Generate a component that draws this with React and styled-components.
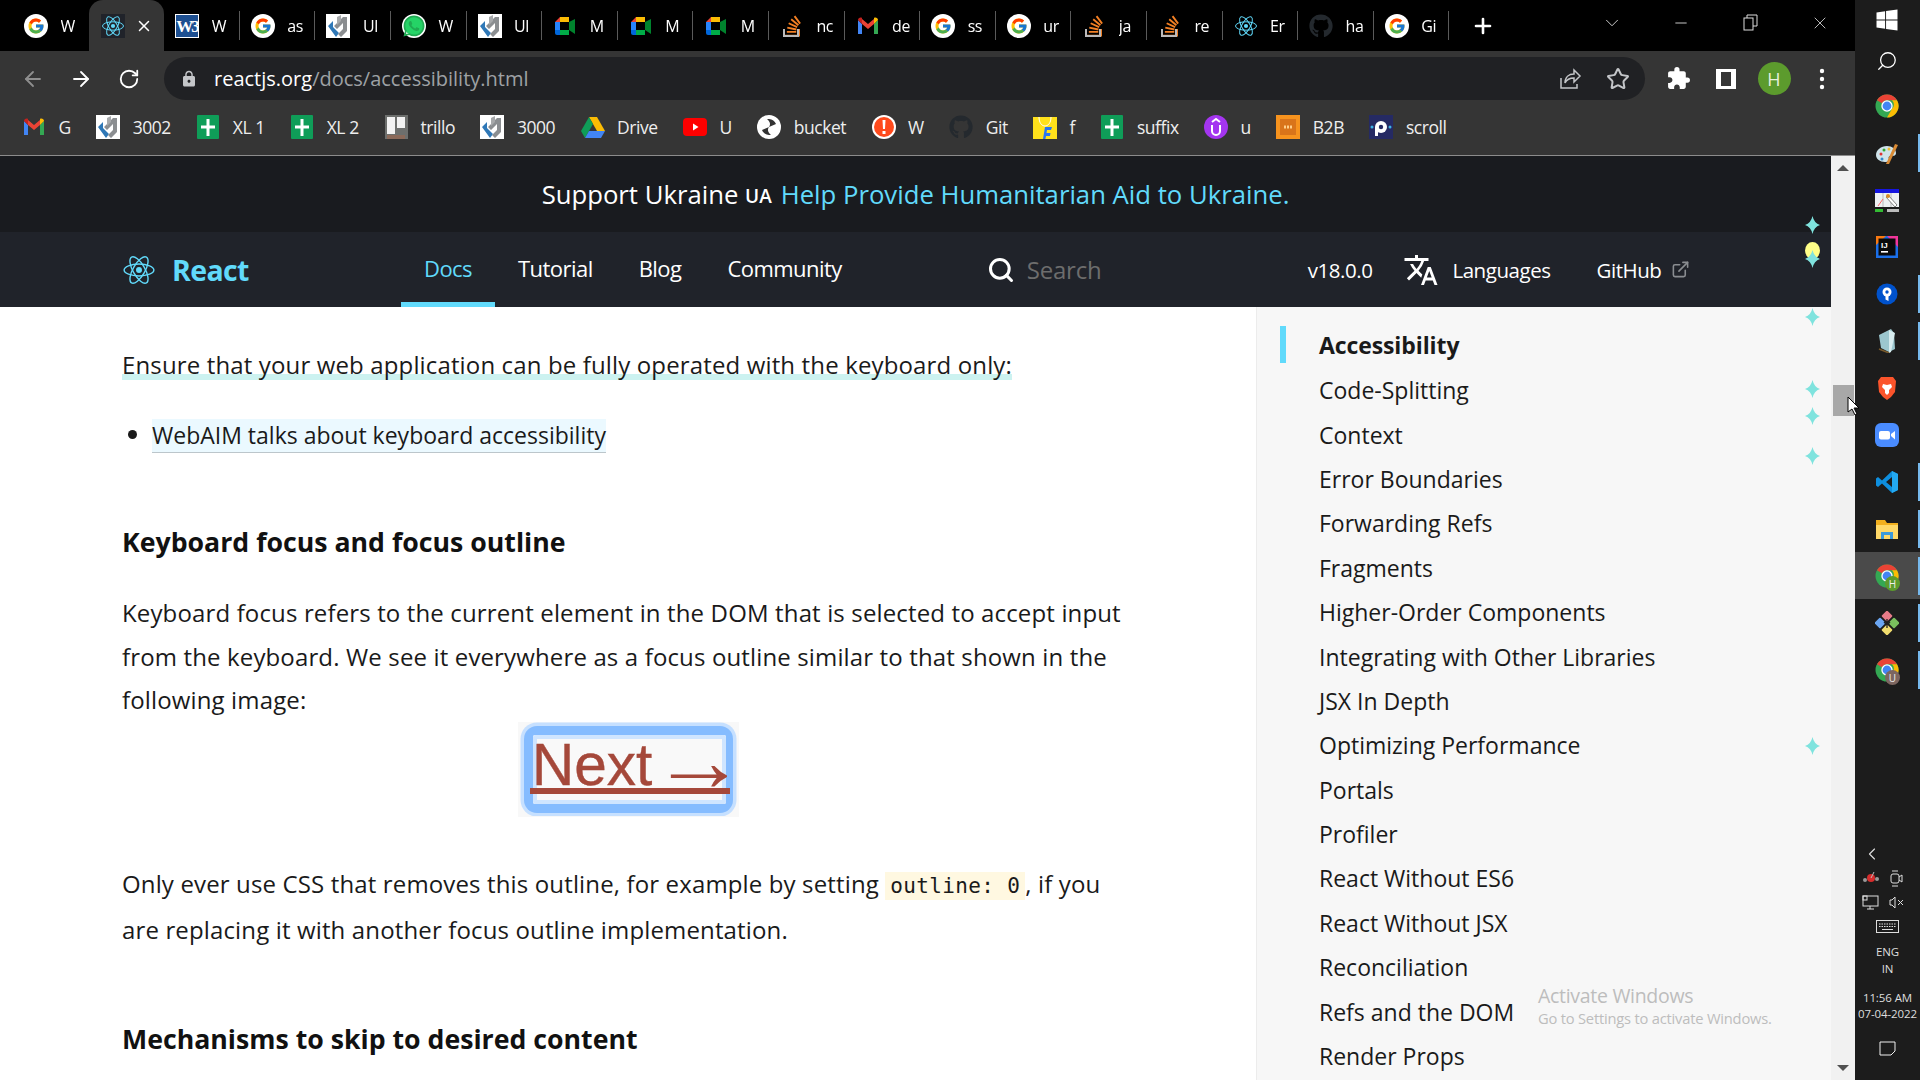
import React from 'react';
import styled, { createGlobalStyle } from 'styled-components';
import { ArrowLeft, ArrowRight, RotateCw, Star as StarIcon, ChevronDown, Plus, X, Minus, ChevronLeft, Search, ExternalLink } from 'lucide-react';
import { FcGoogle } from 'react-icons/fc';
import { FaWhatsapp, FaStackOverflow, FaGithub, FaWindows } from 'react-icons/fa';
import { MdTranslate, MdExtension, MdLock } from 'react-icons/md';

const UI = '"Open Sans", "Noto Sans", sans-serif';

const Global = createGlobalStyle`
  html, body { margin: 0; padding: 0; background: #1c1c1c; overflow: hidden; }
  * { box-sizing: border-box; }
`;

const Screen = styled.div`
  position: relative; width: 1920px; height: 1080px; overflow: hidden; display: flex;
  font-family: ${UI}; background: #fff;
`;
const Chrome = styled.div`width: 1855px; height: 1080px; display: flex; flex-direction: column;`;

const TabStrip = styled.div`height: 51px; background: #000; display: flex; align-items: center; padding-left: 13px; flex: none;`;
const Tab = styled.div`
  width: 75.6px; height: 51px; flex: none; display: flex; align-items: center; gap: 12.5px; padding-left: ${p => p.$active ? 12.5 : 11}px;
  position: relative; color: #fff; font-size: 16px; letter-spacing: -0.4px;
  background: ${p => p.$active ? '#353535' : 'transparent'};
  border-radius: ${p => p.$active ? '14px 14px 0 0' : '0'};
  &::after { content: ''; display: ${p => p.$sep ? 'block' : 'none'}; position: absolute; right: 0; top: 11px; bottom: 11px; width: 1px; background: #5a5a5a; }
`;
const TabTitle = styled.span`display: block; width: 23px; overflow: hidden; white-space: nowrap; -webkit-mask-image: linear-gradient(90deg, #000 70%, transparent);`;
const TabClose = styled.span`display: flex; margin-left: -3px; color: #fff;`;
const NewTab = styled.div`margin-left: 22px; width: 24px; display: flex; color: #fff;`;
const WinControls = styled.div`margin-left: auto; display: flex; color: #ddd;`;
const WinButton = styled.div`width: 69.5px; height: 51px; display: flex; align-items: center; justify-content: center; padding-bottom: 6px;`;

const Toolbar = styled.div`height: 51px; flex: none; background: #353535; display: flex; padding: 6px 0 2px 9px; color: #fff;`;
const ToolButton = styled.div`width: 48px; height: 43px; display: flex; align-items: center; justify-content: center; color: ${p => p.$dim ? '#8e8e8e' : '#fff'}; flex: none;`;
const Address = styled.div`
  width: 1481px; height: 43px; margin: 0 9px 0 11px; border-radius: 22px; background: #202124; display: flex; align-items: center; padding-left: 16px; font-size: 20px; flex: none;
`;
const LockWrap = styled.span`display: flex; color: #c4c6c9; margin-right: 16px;`;
const Host = styled.span`color: #fff;`;
const UrlPath = styled.span`color: #9ea1a5;`;
const AddressActions = styled.div`margin-left: auto; display: flex; align-items: center; gap: 24px; padding-right: 15px; color: #c4c6c9;`;
const Avatar = styled.div`width: 33px; height: 33px; border-radius: 50%; background: #5c9b2d; color: #e8f0df; display: flex; align-items: center; justify-content: center; font-size: 18px;`;

const Bookmarks = styled.div`height: 54px; flex: none; background: #353535; border-bottom: 1px solid #8c8c8c; display: flex; align-items: center; padding: 0 0 4px 22px; gap: 25.4px; color: #eee; font-size: 17.5px; letter-spacing: -0.45px;`;
const Bookmark = styled.div`display: flex; align-items: center; gap: 12.5px; white-space: nowrap;`;

const Page = styled.div`flex: 1; display: flex; min-height: 0;`;
const Site = styled.div`flex: 1; min-width: 0; display: flex; flex-direction: column;`;
const Banner = styled.div`height: 76px; flex: none; background: #191b1f; color: #fff; display: flex; align-items: center; justify-content: center; font-size: 25.7px; white-space: pre;`;
const Country = styled.span`font-size: 19px; font-weight: 600; margin: 3px 4px 0 0;`;
const BannerLink = styled.span`color: #61dafb; margin-left: 5px;`;

const Nav = styled.div`height: 75px; flex: none; background: #20232a; display: flex; align-items: stretch; padding-left: 122px; color: #fff; font-size: 22px; letter-spacing: -0.55px;`;
const Brand = styled.div`display: flex; align-items: center; gap: 16px; color: #61dafb; font-weight: 700; font-size: 28.5px; letter-spacing: -0.6px; width: 279px; flex: none;`;
const NavLink = styled.div`
  padding: 2px 23px 0; display: flex; align-items: center; height: 75px;
  color: ${p => p.$active ? '#61dafb' : '#fff'};
  border-bottom: 5px solid ${p => p.$active ? '#61dafb' : 'transparent'};
`;
const NavSearch = styled.div`margin-left: 122px; width: 321px; flex: none; display: flex; align-items: center; gap: 12px; color: #6d6d6d; font-size: 24px; letter-spacing: -0.2px;`;
const NavRight = styled.div`display: flex; align-items: center; font-size: 20.5px; letter-spacing: -0.45px;`;
const Version = styled.span`margin-right: 31px;`;
const Lang = styled.div`display: flex; align-items: center; gap: 13px; margin-right: 46px;`;
const Hub = styled.div`display: flex; align-items: center; gap: 10px;`;

const Content = styled.div`flex: 1; min-height: 0; display: flex; overflow: hidden;`;
const Article = styled.div`width: 1256px; flex: none; background: #fff; padding: 36px 0 0 122px; color: #1a1a1a; font-size: 24px; letter-spacing: 0.14px; line-height: 43.5px;`;
const Para = styled.p`margin: ${p => p.$mt || 0}px 0 0; white-space: nowrap;`;
const Underlined = styled.span`background: linear-gradient(#ccf2f0, #ccf2f0) 0 calc(100% - 7px) / 100% 6px no-repeat; display: inline-block;`;
const Bullets = styled.ul`margin: 25px 0 0; padding: 0 0 0 30px; `;
const BulletLink = styled.span`background: #ebf9ff; border-bottom: 1px solid #bcc6cb; display: inline-block; line-height: 33px; height: 34px; vertical-align: middle; font-size: 23px; letter-spacing: 0;`;
const Heading = styled.h3`margin: ${p => p.$mt}px 0 0; font-size: 26.7px; font-weight: 700; line-height: 44px; color: #111; white-space: nowrap; letter-spacing: 0;`;
const Code = styled.code`font-family: "DejaVu Sans Mono", "Liberation Mono", monospace; font-size: 21px; letter-spacing: 0.36px; background: #fff8e1; padding: 2px 5px;`;
const Figure = styled.div`
  width: 221px; height: 95px; margin: 0 0 0 396px; background: #f8f8f8; display: flex; padding: 4px 6px;
`;
const FocusRing = styled.div`
  width: 100%; height: 100%; border-radius: 13px; background: #85bcff; box-shadow: 0 0 0 3.5px #c6e0ff; padding: 9px; display: flex; filter: blur(0.3px);
`;
const FocusInner = styled.div`
  flex: 1; background: #f9f9f9; box-shadow: inset 0 0 0 4px #cfe5ff; border-radius: 2px; position: relative;
  color: #a5483a; font-family: "Liberation Sans", Arial, sans-serif; font-size: 58.5px; line-height: 60px; letter-spacing: 0; white-space: nowrap; text-indent: -1px; -webkit-text-stroke: 0.4px #a5483a;
`;
const NextArrow = styled.span`display: inline-block; transform: translateX(-16px) scale(1.62, 1.5); transform-origin: left 62%; -webkit-text-stroke: 0;`;
const NextBar = styled.div`position: absolute; left: -3px; right: -4px; top: 53px; height: 6px; background: #a5483a;`;

const Sidebar = styled.div`flex: 1; background: #f7f7f7; border-left: 1px solid #ececec; padding: 15px 0 0 23px; color: #1a1a1a; font-size: 23px;`;
const SideItem = styled.div`
  height: ${p => p.$active ? 46 : 44.4}px; display: flex; align-items: center; white-space: nowrap;
  font-weight: ${p => p.$active ? 700 : 400}; letter-spacing: ${p => p.$active ? -0.1 : 0}px;
`;
const SideBar = styled.span`width: 6px; height: 37px; background: ${p => p.$active ? '#61dafb' : 'transparent'}; margin-right: 33px; flex: none; margin-bottom: 2px;`;

const Scrollbar = styled.div`width: 24px; flex: none; background: #f1f1f1; display: flex; flex-direction: column; align-items: center;`;
const ScrollBtn = styled.div`height: 24px; width: 100%; display: flex; align-items: center; justify-content: center; flex: none; margin-top: ${p => p.$auto ? 'auto' : 0};`;
const Thumb = styled.div`width: 21px; height: 31px; margin: 205px 0 0 1px; background: #a8a8a8; flex: none;`;
const Tri = styled.span`width: 0; height: 0; border-left: 6px solid transparent; border-right: 6px solid transparent; ${p => p.$down ? 'border-top: 6px solid #505050;' : 'border-bottom: 6px solid #505050;'}`;

const Taskbar = styled.div`width: 65px; flex: none; background: #1c1c1c; display: flex; flex-direction: column; align-items: center; color: #e4e4e4; position: relative;`;
const TaskIcon = styled.div`
  width: 65px; height: ${p => p.$h || 47}px; flex: none; display: flex; align-items: center; justify-content: center; position: relative; padding-right: 2px;
  background: ${p => p.$active ? '#4a4a4a' : 'transparent'};
  &::after { content: ''; display: ${p => p.$run ? 'block' : 'none'}; position: absolute; right: 0; top: 5px; bottom: 4px; width: 2px; background: #76b9ed; }
`;
const Badge = styled.span`position: absolute; left: 30px; top: 24px; width: 15px; height: 15px; border-radius: 50%; background: ${p => p.$c}; color: #eee; font-size: 10px; display: flex; align-items: center; justify-content: center;`;
const Tray = styled.div`margin-top: auto; width: 100%; display: flex; flex-direction: column; align-items: center; color: #dedede;`;
const TrayRow = styled.div`height: 24px; display: flex; align-items: center; justify-content: center; gap: 10px; flex: none; padding-right: ${p => p.$pr || 0}px;`;
const TrayText = styled.div`font-size: 11.5px; line-height: 17px; text-align: center; white-space: nowrap; letter-spacing: -0.1px; margin-top: ${p => p.$mt || 0}px;`;
const Notif = styled.div`height: 38px; margin-top: 13px; display: flex; align-items: flex-start; padding-top: 6px; margin-bottom: 7px;`;

const Sparkle = styled.svg`position: absolute; left: 1805px; width: 15px; height: 18px; top: ${p => p.$y - 9}px; pointer-events: none;`;
const Bulb = styled.div`position: absolute; left: 1805px; top: 242px; width: 15px; height: 17px; border-radius: 50%; background: #ffff88;`;
const Watermark = styled.div`position: absolute; left: 1538px; top: 983px; color: #bdbdbd; font-size: 19.5px; letter-spacing: -0.3px; line-height: 26px; pointer-events: none;`;
const WatermarkSub = styled.div`font-size: 14.7px; line-height: 18px; letter-spacing: -0.2px; margin-top: 0;`;
const Pointer = styled.svg`position: absolute; left: 1847px; top: 396px; width: 13px; height: 20px;`;

const Ico = ({ s = 24, children }) => <svg width={s} height={s} viewBox="0 0 24 24" style={{ flex: 'none', display: 'block' }}>{children}</svg>;
const G = () => <Ico><circle cx="12" cy="12" r="12" fill="#fff" /><foreignObject x="3" y="3" width="18" height="18"><FcGoogle size={18} /></foreignObject></Ico>;
const Atom = ({ s = 24, bg, stroke = '#61dafb' }) => <Ico s={s}>{bg && <rect width="24" height="24" fill={bg} />}<g fill="none" stroke={stroke} strokeWidth="1"><ellipse cx="12" cy="12" rx="10.5" ry="4.2" /><ellipse cx="12" cy="12" rx="10.5" ry="4.2" transform="rotate(60 12 12)" /><ellipse cx="12" cy="12" rx="10.5" ry="4.2" transform="rotate(120 12 12)" /></g><circle cx="12" cy="12" r="2.1" fill={stroke} /></Ico>;
const W3 = () => <Ico><rect width="24" height="24" fill="#fff" /><rect x="1" y="1" width="22" height="22" fill="#1d4f91" /><text x="12" y="18" fontSize="17" fontWeight="700" fill="#fff" textAnchor="middle" fontFamily="Liberation Serif, serif" letterSpacing="-2">W3</text></Ico>;
const Lucee = () => <Ico><rect width="24" height="24" fill="#fff" /><path d="M2 12l5-5v6l6 6-3 4z" fill="#2f78b7" /><path d="M8 12l3 3 6-6v6l-5 5 3 3 6-6V3h-4z" fill="#8b8e91" /><path d="M11 3v8l4-4V1z" fill="#a7a9ab" /></Ico>;
const WA = () => <Ico><circle cx="12" cy="12" r="12" fill="#fff" /><circle cx="12" cy="12" r="9.5" fill="#25d366" /><foreignObject x="0" y="0" width="24" height="24"><FaWhatsapp size={24} color="#1faa52" /></foreignObject></Ico>;
const Meet = () => <Ico><path d="M2 8l5-5h9v5H7v8H2z" fill="#ea4335" /><path d="M7 3h9v5H7z" fill="#fbbc04" /><path d="M2 8h5v8H2z" fill="#2684fc" /><path d="M2 16h5v5H4a2 2 0 0 1-2-2z" fill="#0066da" /><path d="M7 16h9v5H7z" fill="#00ac47" /><path d="M16 8v8l6 4V5z" fill="#00832d" /></Ico>;
const SO = () => <Ico><foreignObject width="24" height="24"><FaStackOverflow size={24} color="#f48024" /></foreignObject><path d="M4 15v7h14v-7" fill="none" stroke="#bcbbbb" strokeWidth="2" /></Ico>;
const Gmail = () => <Ico><path d="M2 6v14h4V10z" fill="#4285f4" /><path d="M18 10v10h4V6z" fill="#34a853" /><path d="M6 10l6 5 6-5V5l-6 5-6-5z" fill="#ea4335" /><path d="M2 6c0-2 2.5-3 4-2l0 6z" fill="#c5221f" /><path d="M22 6c0-2-2.5-3-4-2v6z" fill="#fbbc04" /></Ico>;
const Hub_ = () => <Ico><foreignObject width="24" height="24"><FaGithub size={24} color="#24292e" /></foreignObject></Ico>;
const Sheets = () => <Ico><rect x="1" width="22" height="24" rx="1" fill="#0f9d58" /><path d="M10.5 4h3v6.5H19v3h-5.5V21h-3v-7.5H5v-3h5.5z" fill="#fff" /></Ico>;
const Trillo = () => <Ico><rect x="1" width="23" height="24" fill="#6d6f6d" /><rect x="3" y="2" width="8" height="17" fill="#f2f2f2" /><rect x="13" y="2" width="8" height="11" fill="#f2f2f2" /><rect x="3" y="20" width="18" height="4" fill="#8b6a5a" /></Ico>;
const Drive = () => <Ico><path d="M8 2h8l8 14h-8z" fill="#fbbc04" /><path d="M8 2L0 16l4 7 8-14z" fill="#0f9d58" /><path d="M4 23h16l4-7H8z" fill="#4285f4" /></Ico>;
const YT = () => <Ico><rect y="3" width="24" height="18" rx="4" fill="#ff0000" /><path d="M10 8.5l5.5 3.5-5.5 3.5z" fill="#fff" /></Ico>;
const Bucket = () => <Ico><circle cx="12" cy="12" r="12" fill="#fff" /><path d="M12 4a8 8 0 0 1 7 5l-7 3c2-3 1-5-2-8zM12 20a8 8 0 0 1-7-5l7-3c-2 3-1 5 2 8z" fill="#333" /></Ico>;
const Alert = () => <Ico><circle cx="12" cy="12" r="12" fill="#fff" /><circle cx="12" cy="12" r="10" fill="#ff4a1c" /><path d="M10.5 5h3l-.5 9h-2zM10.5 16h3v3h-3z" fill="#fff" /></Ico>;
const Flip = () => <Ico><path d="M0 2h24v22H0z" fill="#ffe11b" /><path d="M6 2c0 6 3 9 6 9s6-3 6-9" fill="none" stroke="#fff" strokeWidth="1" /><path d="M10 24l2-12h7l-1 3h-4l-.5 3h4l-.5 3h-4l-.6 3z" fill="#2874f0" /></Ico>;
const UBook = () => <Ico><ellipse cx="12" cy="12" rx="12" ry="12" fill="#a435f0" /><path d="M8 10v6a4 4 0 0 0 8 0v-6" fill="none" stroke="#fff" strokeWidth="2" /><path d="M8 7l4-3 4 3" fill="none" stroke="#fff" strokeWidth="2" /></Ico>;
const B2B = () => <Ico><rect width="24" height="24" fill="#f7931e" /><rect x="4" y="4" width="16" height="16" fill="#d9741a" /><path d="M8 12h8" stroke="#ffcf8a" strokeWidth="3" strokeDasharray="2 1" /></Ico>;
const Scroll = () => <Ico><rect width="24" height="24" fill="#252a63" /><circle cx="12" cy="12" r="6" fill="#fff" /><circle cx="12" cy="12" r="2.2" fill="#252a63" /><rect x="6" y="12" width="3" height="9" fill="#fff" /><circle cx="3" cy="12" r="1.5" fill="#3db4e8" /><circle cx="21" cy="12" r="1.5" fill="#3db4e8" /></Ico>;
const ChromeLogo = ({ s = 24 }) => <Ico s={s}><circle cx="12" cy="12" r="11.5" fill="#34a853" /><path d="M12 .5a11.5 11.5 0 0 1 10 5.75H12a5.75 5.75 0 0 0-5 2.9L2 6.3A11.5 11.5 0 0 1 12 .5z" fill="#ea4335" /><path d="M22 6.25A11.5 11.5 0 0 1 12 23.5l5-8.65a5.75 5.75 0 0 0 0-8.6z" fill="#fbbc04" /><circle cx="12" cy="12" r="5.7" fill="#fff" /><circle cx="12" cy="12" r="4.4" fill="#4285f4" /></Ico>;
const Palette = () => <Ico><path d="M1 14c0-5 5-9 11-9 5 0 9 3 9 7 0 3-3 3-5 3s-3 1-2 3c1 2-1 3-4 3-5 0-9-3-9-7z" fill="#cfe3ea" /><circle cx="6" cy="13" r="1.5" fill="#d33" /><circle cx="9" cy="9" r="1.5" fill="#3a3" /><circle cx="14" cy="8" r="1.5" fill="#eb3" /><circle cx="7" cy="18" r="1.5" fill="#38c" /><path d="M11 23L20 3l3 1-9 19z" fill="#d98a34" /></Ico>;
const Wand = () => <Ico><rect y="1" width="24" height="4" fill="#1616e0" /><rect y="5" width="24" height="14" fill="#eef1f3" /><path d="M8 5v14M16 5v14" stroke="#bbb" /><path d="M13 7l9 10-2 2-9-10z" fill="#fff" stroke="#333" strokeWidth=".6" /><circle cx="13" cy="8" r="2" fill="#d98a24" /><path d="M3 18l5-7" stroke="#f66" /><rect y="21" width="8" height="3" fill="#3b3" /><rect x="12" y="21" width="12" height="3" fill="#bbb" /></Ico>;
const IJ = () => <Ico><rect x="1" y="1" width="22" height="22" fill="#1b6fe8" /><path d="M1 1h22v11L12 1z" fill="#f0369a" /><path d="M1 1h10L1 10z" fill="#f97a12" /><rect x="3.5" y="3.5" width="17" height="17" fill="#0a0a0a" /><text x="6" y="12.5" fontSize="8" fontWeight="700" fill="#fff" fontFamily="Liberation Sans, sans-serif">IJ</text><rect x="6" y="16" width="7" height="1.6" fill="#fff" /></Ico>;
const Tree = () => <Ico><circle cx="12" cy="12" r="10.5" fill="#0052cc" /><circle cx="12" cy="10" r="4.5" fill="#fff" /><circle cx="12" cy="10" r="1.7" fill="#0052cc" /><path d="M10.5 13h3v6l-3-1.5z" fill="#fff" /></Ico>;
const Note = () => <Ico><path d="M4 6l12-6 3 4 1 16-6 3-8-4z" fill="#9cc7cf" /><path d="M14 1l6 3-4 19-2 1z" fill="#d7ecef" /><path d="M4 20l10 4" stroke="#7a5b2c" strokeWidth="1.5" /></Ico>;
const Brave = () => <Ico><path d="M6 1h12l3 4-1 11-4 5-4 3-4-3-4-5L3 5z" fill="#fb542b" /><path d="M8 8l4 1 4-1 1 3-3 3v3l-2 2-2-2v-3l-3-3z" fill="#fff" /></Ico>;
const Zoom = () => <Ico><rect width="24" height="24" rx="6" fill="#4a8cff" /><rect x="4" y="8" width="11" height="8.5" rx="2" fill="#fff" /><path d="M16 11l4-3v8.5L16 13z" fill="#fff" /></Ico>;
const VS = () => <Ico><path d="M17 1l6 3v16l-6 3-10-9.5L3 17l-2-1.5v-7L3 7l4 3.5zM17 7l-6 5 6 5z" fill="#0e8fdf" /><path d="M17 1l6 3v16l-6 3z" fill="#23a9f2" /></Ico>;
const Folder = () => <Ico><path d="M1 3h9l2 3h11v16H1z" fill="#f2b01e" /><path d="M1 8h22v14H1z" fill="#ffd968" /><path d="M6 15h12v7h-3v-4H9v4H6z" fill="#3c9ad9" /></Ico>;
const Diamond = () => <Ico><rect x="-4" y="-4" width="8" height="8" rx="1" transform="translate(12 5) rotate(45)" fill="#e77b89" /><rect x="-4" y="-4" width="8" height="8" rx="1" transform="translate(19 12) rotate(45)" fill="#7ac05e" /><rect x="-4" y="-4" width="8" height="8" rx="1" transform="translate(5 12) rotate(45)" fill="#6ba6f2" /><rect x="-4" y="-4" width="8" height="8" rx="1" transform="translate(12 19) rotate(45)" fill="#f1dd6e" /><path d="M12 8v9M9 11l3 3 3-3" stroke="#222" strokeWidth="1.3" fill="none" /></Ico>;

const tabs = [[G, 'W'], [Atom, '', true], [W3, 'W'], [G, 'as'], [Lucee, 'Ul'], [WA, 'W'], [Lucee, 'Ul'], [Meet, 'M'], [Meet, 'M'], [Meet, 'M'], [SO, 'nc'], [Gmail, 'de'], [G, 'ss'], [G, 'ur'], [SO, 'ja'], [SO, 're'], [Atom, 'Er'], [Hub_, 'ha'], [G, 'Gi']];
const marks = [[Gmail, 'G'], [Lucee, '3002'], [Sheets, 'XL 1'], [Sheets, 'XL 2'], [Trillo, 'trillo'], [Lucee, '3000'], [Drive, 'Drive'], [YT, 'U'], [Bucket, 'bucket'], [Alert, 'W'], [Hub_, 'Git'], [Flip, 'f'], [Sheets, 'suffix'], [UBook, 'u'], [B2B, 'B2B'], [Scroll, 'scroll']];
const topics = ['Code-Splitting', 'Context', 'Error Boundaries', 'Forwarding Refs', 'Fragments', 'Higher-Order Components', 'Integrating with Other Libraries', 'JSX In Depth', 'Optimizing Performance', 'Portals', 'Profiler', 'React Without ES6', 'React Without JSX', 'Reconciliation', 'Refs and the DOM', 'Render Props'];
const sparkles = [225, 317, 389, 416, 456, 746];
const sparklePath = 'M7.5 0Q9 7 15 9 9 11 7.5 18 6 11 0 9 6 7 7.5 0z';

export default function App() {
  return (
    <Screen>
      <Global />
      <Chrome>
        <TabStrip>
          {tabs.map(([I, t, active], i) => (
            <Tab key={i} $active={active} $sep={!active && i !== 0}>
              {active ? <Atom bg="#20232a" /> : <I />}
              {active ? <TabClose><X size={18} /></TabClose> : <TabTitle>{t}</TabTitle>}
            </Tab>
          ))}
          <NewTab><Plus size={24} strokeWidth={2.6} /></NewTab>
          <WinControls>
            <WinButton><ChevronDown size={22} strokeWidth={1} /></WinButton>
            <WinButton><Minus size={18} strokeWidth={1.2} /></WinButton>
            <WinButton><svg width="15" height="17" viewBox="0 0 15 17" fill="none" stroke="#ddd"><rect x="1" y="4" width="9" height="12" /><path d="M4 4V1h10v11h-4" /></svg></WinButton>
            <WinButton><X size={20} strokeWidth={1} /></WinButton>
          </WinControls>
        </TabStrip>
        <Toolbar>
          <ToolButton $dim><ArrowLeft size={24} strokeWidth={1.8} /></ToolButton>
          <ToolButton><ArrowRight size={24} strokeWidth={1.8} /></ToolButton>
          <ToolButton><RotateCw size={22} strokeWidth={2} /></ToolButton>
          <Address>
            <LockWrap><MdLock size={18} /></LockWrap>
            <Host>reactjs.org</Host><UrlPath>/docs/accessibility.html</UrlPath>
            <AddressActions>
              <svg width="24" height="24" viewBox="0 0 24 24" fill="none" stroke="#c4c6c9" strokeWidth="1.5"><path d="M3 11v10h16v-4" /><path d="M7 16c0-6 4-9 9-9V3l6 6-6 6v-4c-4 0-7 1-9 5z" /></svg>
              <StarIcon size={24} strokeWidth={2} />
            </AddressActions>
          </Address>
          <ToolButton><MdExtension size={25} /></ToolButton>
          <ToolButton><svg width="22" height="22" viewBox="0 0 22 22"><path d="M1 1h20v20H1zM6 4v14h10V4z" fill="#fff" fillRule="evenodd" /></svg></ToolButton>
          <ToolButton><Avatar>H</Avatar></ToolButton>
          <ToolButton><svg width="6" height="22" viewBox="0 0 6 22" fill="#fff"><circle cx="3" cy="3" r="2.2" /><circle cx="3" cy="11" r="2.2" /><circle cx="3" cy="19" r="2.2" /></svg></ToolButton>
        </Toolbar>
        <Bookmarks>
          {marks.map(([I, t], i) => <Bookmark key={i}><I />{t}</Bookmark>)}
        </Bookmarks>
        <Page>
          <Site>
            <Banner>Support Ukraine <Country>UA</Country> <BannerLink>Help Provide Humanitarian Aid to Ukraine.</BannerLink></Banner>
            <Nav>
              <Brand><Atom s={34} />React</Brand>
              <NavLink $active>Docs</NavLink>
              <NavLink>Tutorial</NavLink>
              <NavLink>Blog</NavLink>
              <NavLink>Community</NavLink>
              <NavSearch><Search size={28} color="#fff" strokeWidth={2.6} />Search</NavSearch>
              <NavRight>
                <Version>v18.0.0</Version>
                <Lang><MdTranslate size={36} />Languages</Lang>
                <Hub>GitHub<ExternalLink size={19} color="#8a8d91" /></Hub>
              </NavRight>
            </Nav>
            <Content>
              <Article>
                <Para><Underlined>Ensure that your web application can be fully operated with the keyboard only:</Underlined></Para>
                <Bullets><li><BulletLink>WebAIM talks about keyboard accessibility</BulletLink></li></Bullets>
                <Heading $mt={65}>Keyboard focus and focus outline</Heading>
                <Para $mt={27}>Keyboard focus refers to the current element in the DOM that is selected to accept input<br />from the keyboard. We see it everywhere as a focus outline similar to that shown in the<br />following image:</Para>
                <Figure><FocusRing><FocusInner>Next <NextArrow>→</NextArrow><NextBar /></FocusInner></FocusRing></Figure>
                <Para $mt={45}>Only ever use CSS that removes this outline, for example by setting <Code>outline: 0</Code>, if you<br />are replacing it with another focus outline implementation.</Para>
                <Heading $mt={65}>Mechanisms to skip to desired content</Heading>
              </Article>
              <Sidebar>
                <SideItem $active><SideBar $active />Accessibility</SideItem>
                {topics.map(t => <SideItem key={t}><SideBar />{t}</SideItem>)}
              </Sidebar>
            </Content>
          </Site>
          <Scrollbar>
            <ScrollBtn><Tri /></ScrollBtn>
            <Thumb />
            <ScrollBtn $auto><Tri $down /></ScrollBtn>
          </Scrollbar>
        </Page>
      </Chrome>
      <Taskbar>
        <TaskIcon $h={40}><FaWindows size={24} color="#fff" /></TaskIcon>
        <TaskIcon $h={42}><Search size={22} color="#fff" strokeWidth={1.4} style={{ transform: 'scaleX(-1)' }} /></TaskIcon>
        <TaskIcon><ChromeLogo /></TaskIcon>
        <TaskIcon $run><Palette /></TaskIcon>
        <TaskIcon><Wand /></TaskIcon>
        <TaskIcon><IJ /></TaskIcon>
        <TaskIcon $run><Tree /></TaskIcon>
        <TaskIcon $run><Note /></TaskIcon>
        <TaskIcon><Brave /></TaskIcon>
        <TaskIcon><Zoom /></TaskIcon>
        <TaskIcon $run><VS /></TaskIcon>
        <TaskIcon $run><Folder /></TaskIcon>
        <TaskIcon $run $active><ChromeLogo /><Badge $c="#5c9b2d">H</Badge></TaskIcon>
        <TaskIcon $run><Diamond /></TaskIcon>
        <TaskIcon $run><ChromeLogo /><Badge $c="#7d6660">U</Badge></TaskIcon>
        <Tray>
          <TrayRow $pr={32}><ChevronLeft size={20} strokeWidth={1.4} /></TrayRow>
          <TrayRow $pr={10}>
            <svg width="16" height="14" viewBox="0 0 16 14"><circle cx="8" cy="7" r="4" fill="#d62c2c" /><circle cx="2" cy="9" r="2" fill="#999" /><circle cx="14" cy="8" r="2" fill="#999" /><path d="M8 7l3-6" stroke="#bbb" /></svg>
            <svg width="14" height="17" viewBox="0 0 14 17" fill="none" stroke="#ddd"><rect x="2" y="4" width="8" height="9" rx="2" /><path d="M10 7l3-2v7l-3-2M3 1h6M3 16h6" /></svg>
          </TrayRow>
          <TrayRow $pr={10}>
            <svg width="17" height="15" viewBox="0 0 17 15" fill="none" stroke="#ddd"><rect x="1" y="1" width="15" height="10" /><path d="M8 11v3M5 14h7" /><rect x="1" y="1" width="4" height="4" /></svg>
            <svg width="15" height="13" viewBox="0 0 15 13" fill="none" stroke="#ddd"><path d="M1 4h2l3-3v11L3 9H1zM9 4l5 5M14 4l-5 5" /></svg>
          </TrayRow>
          <TrayRow><svg width="23" height="13" viewBox="0 0 23 13" fill="none" stroke="#ddd"><rect x=".5" y=".5" width="22" height="12" /><path d="M3 4h17M3 6.5h17" strokeDasharray="1.5 1" /><path d="M6 9.5h11" /></svg></TrayRow>
          <TrayText $mt={5}>ENG<br />IN</TrayText>
          <TrayText $mt={12}>11:56 AM</TrayText>
          <TrayText style={{ marginTop: -1 }}>07-04-2022</TrayText>
          <Notif><svg width="17" height="16" viewBox="0 0 17 16" fill="none" stroke="#eee"><path d="M1 1h15v9l-4 4H1z" /></svg></Notif>
        </Tray>
      </Taskbar>
      {sparkles.map(y => <Sparkle key={y} $y={y} viewBox="0 0 15 18"><path d={sparklePath} fill="#7fe3de" /></Sparkle>)}
      <Bulb />
      <Sparkle $y={259} viewBox="0 0 15 18"><path d={sparklePath} fill="#7fe3de" /></Sparkle>
      <Watermark>Activate Windows<WatermarkSub>Go to Settings to activate Windows.</WatermarkSub></Watermark>
      <Pointer viewBox="0 0 13 20"><path d="M1 1v15l4-3 3 6 2-1-3-6h5z" fill="#fff" stroke="#000" /></Pointer>
    </Screen>
  );
}
